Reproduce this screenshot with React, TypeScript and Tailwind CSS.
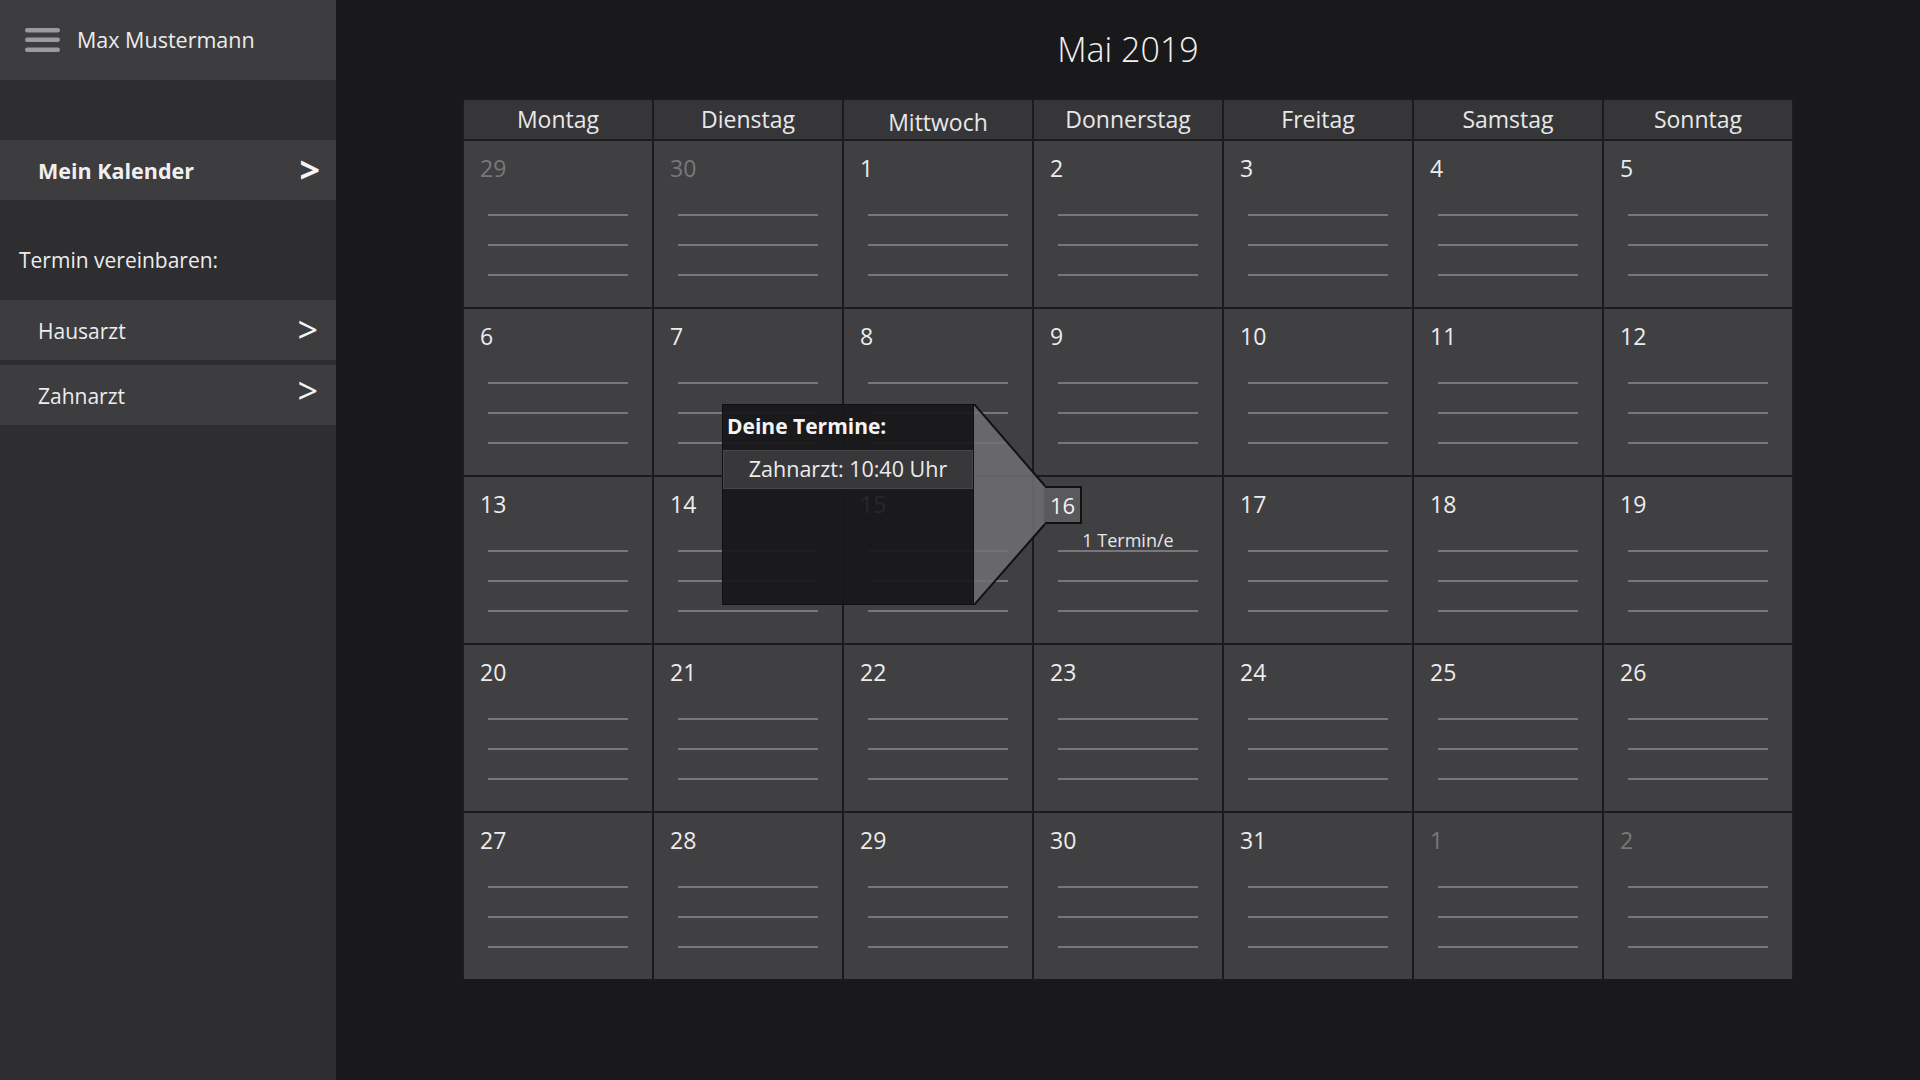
import React from "react";

type Day = { n: number; muted?: boolean; special?: boolean };

const weeks: Day[][] = [
  [{ n: 29, muted: true }, { n: 30, muted: true }, { n: 1 }, { n: 2 }, { n: 3 }, { n: 4 }, { n: 5 }],
  [{ n: 6 }, { n: 7 }, { n: 8 }, { n: 9 }, { n: 10 }, { n: 11 }, { n: 12 }],
  [{ n: 13 }, { n: 14 }, { n: 15 }, { n: 16, special: true }, { n: 17 }, { n: 18 }, { n: 19 }],
  [{ n: 20 }, { n: 21 }, { n: 22 }, { n: 23 }, { n: 24 }, { n: 25 }, { n: 26 }],
  [{ n: 27 }, { n: 28 }, { n: 29 }, { n: 30 }, { n: 31 }, { n: 1, muted: true }, { n: 2, muted: true }],
];

const dayNames = ["Montag", "Dienstag", "Mittwoch", "Donnerstag", "Freitag", "Samstag", "Sonntag"];

function Lines() {
  return (
    <div className="flex flex-col items-center gap-[28px]">
      <div className="h-[2px] w-[140px] bg-[#78787a]" />
      <div className="h-[2px] w-[140px] bg-[#78787a]" />
      <div className="h-[2px] w-[140px] bg-[#78787a]" />
    </div>
  );
}

function Cell({ d }: { d: Day }) {
  if (d.special) {
    return (
      <div className="flex flex-col bg-[#404042]">
        <div className="pl-[9px] pt-[9px]">
          <div className="flex h-[38px] w-[39px] items-center justify-center border-2 border-[#111113] bg-[#5a5a5c] text-[22px] leading-none text-[#f2f2f2]">
            16
          </div>
        </div>
        <div className="mt-[5px] h-[22px] text-center text-[18px] leading-[22px] text-[#e6e6e6]">1 Termin/e</div>
        <div className="-mt-[1px]">
          <Lines />
        </div>
      </div>
    );
  }
  return (
    <div className="flex flex-col bg-[#404042] pt-[13px]">
      <div
        className={
          "h-[28px] pl-[16px] text-[23px] leading-[28px] " + (d.muted ? "text-[#78787b]" : "text-[#ececec]")
        }
      >
        {d.n}
      </div>
      <div className="mt-[32px]">
        <Lines />
      </div>
    </div>
  );
}

function Chevron({ bold, className }: { bold?: boolean; className?: string }) {
  return (
    <span className={(bold ? "font-bold " : "") + "text-[36px] leading-none text-[#f4f4f4] " + (className ?? "")}>
      &gt;
    </span>
  );
}

export default function App() {
  return (
    <div className="flex h-[1080px] w-[1920px] overflow-hidden bg-[#19191b] font-['Open_Sans',sans-serif] text-[#f0f0f0]">
      <aside className="flex w-[336px] shrink-0 flex-col bg-[#2e2e30]">
        <div className="flex h-[80px] items-center bg-[#3d3d3f] pl-[25px]">
          <svg width="35" height="24" viewBox="0 0 35 24">
            <rect x="0" y="0" width="35" height="4.5" rx="2.25" fill="#9b9b9d" />
            <rect x="0" y="9.5" width="35" height="4.5" rx="2.25" fill="#9b9b9d" />
            <rect x="0" y="19.5" width="35" height="4.5" rx="2.25" fill="#9b9b9d" />
          </svg>
          <span className="ml-[17px] text-[21.5px] text-[#ececec]">Max Mustermann</span>
        </div>
        <div className="h-[60px]" />
        <div className="flex h-[60px] items-center justify-between bg-[#3d3d3f] pl-[38px] pr-[16px] pt-[2px]">
          <span className="text-[21.5px] font-bold">Mein Kalender</span>
          <Chevron bold className="-mt-[2px]" />
        </div>
        <div className="h-[100px] pl-[19px] pt-[45px] text-[21px] text-[#ececec]">Termin vereinbaren:</div>
        <div className="flex h-[60px] items-center justify-between bg-[#3d3d3f] pl-[38px] pr-[18px] pt-[4px]">
          <span className="text-[21px] text-[#ececec]">Hausarzt</span>
          <Chevron className="-mt-[4px]" />
        </div>
        <div className="mt-[5px] flex h-[60px] items-center justify-between bg-[#3d3d3f] pl-[38px] pr-[18px] pt-[4px]">
          <span className="text-[21px] text-[#ececec]">Zahnarzt</span>
          <Chevron className="-mt-[12px]" />
        </div>
      </aside>

      <main className="flex flex-1 flex-col items-center">
        <div className="flex h-[98px] items-center justify-center text-[34px] font-light text-[#f2f2f2]">
          Mai 2019
        </div>
        <div className="relative grid grid-cols-[repeat(7,188px)] grid-rows-[39px_repeat(5,166px)] gap-[2px] bg-[#1b1b1d] p-[2px]">
          {dayNames.map((name) => (
            <div
              key={name}
              className={
                "flex items-center justify-center bg-[#363638] text-[23px] text-[#e8e8e8] " +
                (name === "Mittwoch" ? "pt-[6px]" : "")
              }
            >
              {name}
            </div>
          ))}
          {weeks.flat().map((d, i) => (
            <Cell key={i} d={d} />
          ))}

          {/* popup overlay */}
          <div className="absolute left-[260px] top-[306px] flex h-[201px] w-[252px] flex-col border border-[#111113] bg-[#18181a]/[0.93]">
            <div className="h-[45px] pl-[4px] pt-[6px] text-[21px] font-bold text-[#f4f4f4]">Deine Termine:</div>
            <div className="flex h-[39px] items-center justify-center border border-[#474749] bg-[#38383a] text-[21.5px] text-[#ececec]">
              Zahnarzt: 10:40 Uhr
            </div>
          </div>
          <svg
            className="absolute left-[512px] top-[306px]"
            width="72"
            height="201"
            viewBox="0 0 72 201"
          >
            <polygon points="0,0 71,82 71,120 0,201" fill="#707072" fillOpacity="0.85" />
            <polyline points="0,0 71,82" fill="none" stroke="#111113" strokeWidth="2" />
            <polyline points="71,120 0,201" fill="none" stroke="#111113" strokeWidth="2" />
          </svg>
        </div>
      </main>
    </div>
  );
}
